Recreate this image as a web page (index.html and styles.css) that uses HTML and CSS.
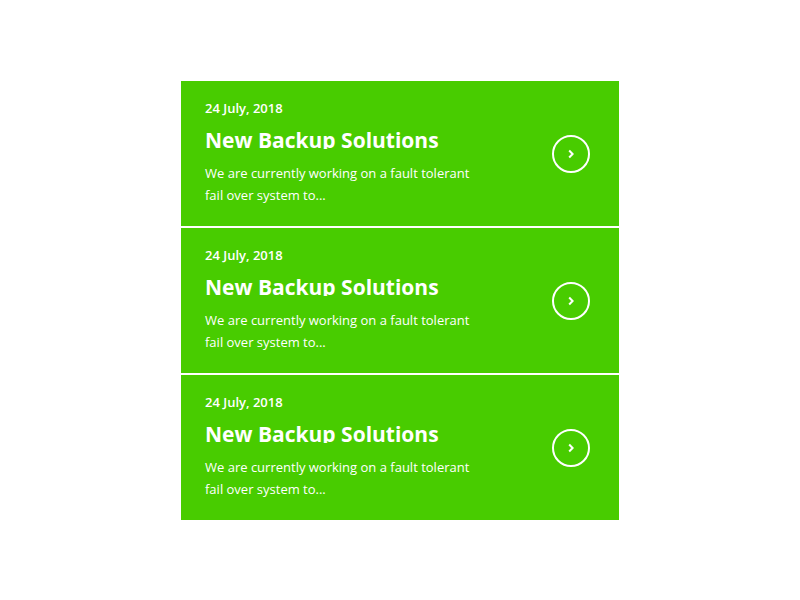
FILE: index.html
```html
<!DOCTYPE html>
<html>
<head>
<meta charset="utf-8">
<link rel="stylesheet" href="styles.css">
</head>
<body>
<div class="list">
  <div class="card">
    <div class="content">
      <div class="date">24 July, 2018</div>
      <h2 class="title">New Backup Solutions</h2>
      <p class="text">We are currently working on a fault tolerant fail over system to...</p>
    </div>
    <div class="btn"><svg width="10" height="10" viewBox="0 0 10 10"><path d="M3.2 1.5 L6.6 5 L3.2 8.5" fill="none" stroke="#fff" stroke-width="2"/></svg></div>
  </div>
  <div class="card">
    <div class="content">
      <div class="date">24 July, 2018</div>
      <h2 class="title">New Backup Solutions</h2>
      <p class="text">We are currently working on a fault tolerant fail over system to...</p>
    </div>
    <div class="btn"><svg width="10" height="10" viewBox="0 0 10 10"><path d="M3.2 1.5 L6.6 5 L3.2 8.5" fill="none" stroke="#fff" stroke-width="2"/></svg></div>
  </div>
  <div class="card">
    <div class="content">
      <div class="date">24 July, 2018</div>
      <h2 class="title">New Backup Solutions</h2>
      <p class="text">We are currently working on a fault tolerant fail over system to...</p>
    </div>
    <div class="btn"><svg width="10" height="10" viewBox="0 0 10 10"><path d="M3.2 1.5 L6.6 5 L3.2 8.5" fill="none" stroke="#fff" stroke-width="2"/></svg></div>
  </div>
</div>
</body>
</html>
```
FILE: styles.css
```css
html, body { margin: 0; padding: 0; background: #fff; }
body { font-family: "Open Sans", sans-serif; color: #fff; }
.list {
  width: 438px;
  margin: 81px 0 0 181px;
  display: flex;
  flex-direction: column;
  gap: 2px;
}
.card {
  height: 145px;
  box-sizing: border-box;
  background: #48cc00;
  display: flex;
  align-items: center;
  justify-content: space-between;
  padding: 0 29px 0 24px;
}
.content { width: 280px; padding-bottom: 2px; }
.date {
  font-size: 13px;
  font-weight: 600;
  line-height: 18px;
}
.title {
  margin: 11px 0 0;
  font-size: 21px;
  font-weight: 700;
  line-height: 24px;
  height: 21px;
  overflow: hidden;
  white-space: nowrap;
}
.text {
  margin: 13px 0 0;
  font-size: 13px;
  line-height: 22px;
  width: 270px;
}
.btn {
  width: 38px;
  height: 38px;
  box-sizing: border-box;
  border: 2px solid #fff;
  border-radius: 50%;
  display: flex;
  align-items: center;
  justify-content: center;
}
.btn svg { display: block; }
```
